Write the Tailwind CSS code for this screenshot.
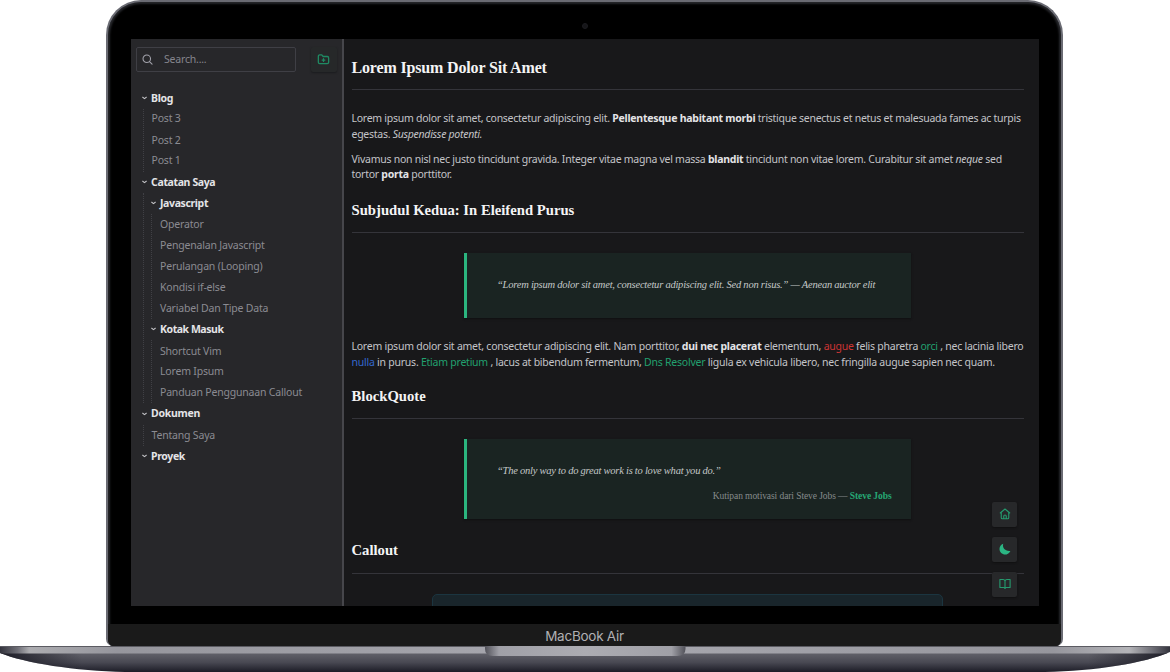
<!DOCTYPE html>
<html lang="id">
<head>
<meta charset="utf-8">
<title>Lorem Ipsum Dolor Sit Amet</title>
<script src="https://cdn.jsdelivr.net/npm/@tailwindcss/browser@4"></script>
</head>
<body class="h-[672px] w-[1170px] overflow-hidden bg-white">
<div class="relative flex h-[672px] w-[1170px] flex-col items-center">

  <!-- lid -->
  <div class="relative h-[646px] w-[957px] -ml-px rounded-t-[35px] rounded-b-[7px] border-[2px] border-b-0 border-[#6a6b73] bg-black flex flex-col overflow-hidden shadow-[inset_0_0_2px_2px_#25262a]">
    <div class="flex h-[36.5px] shrink-0 items-center justify-center pt-[11px]"><span class="size-[6px] rounded-full bg-[#151518] border border-[#1c1c20]"></span></div>

    <!-- screen -->
    <div class="relative ml-[22.5px] flex h-[567.5px] w-[908.5px] shrink-0 overflow-hidden bg-[#18181a] font-['Noto_Sans',sans-serif] text-[10.5px] tracking-[-0.27px] text-[#c4c4c8]">
      <aside class="flex h-full w-[213px] shrink-0 flex-col border-r-2 border-[#46464b] bg-[#27272a]">
        <div class="flex h-[26px] mt-[8px] pl-[5px] shrink-0">
          <div class="flex h-[25.5px] w-[160.5px] items-center rounded-[2px] border border-[#3f3f45] pl-[5px] text-[#85858d]">
            <svg class="size-[11px]" viewBox="0 0 12 12" fill="none" stroke="#a1a1aa" stroke-width="1.2" stroke-linecap="round"><circle cx="5.2" cy="5.2" r="4.1"/><path d="M8.2 8.2 11 11"/></svg>
            <span class="ml-[11.500px] leading-[24px] pb-[1px] tracking-[-0.2px] whitespace-nowrap">Search....</span>
          </div>
          <div class="ml-[15px] flex size-[25.5px] items-center justify-center rounded-[2px] bg-[#262829] shadow-[0_1px_2px_#1b1c1e]">
            <svg class="size-[13px]" viewBox="0 0 24 24" fill="none" stroke="#1f8a63" stroke-width="2.400" stroke-linecap="round" stroke-linejoin="round"><path d="M12 10.500v5M9.500 13h5M2.500 17V6a2.500 2.500 0 0 1 2.500-2.500h3.800l2.500 3H19a2.500 2.500 0 0 1 2.500 2.500v8a2.500 2.500 0 0 1-2.500 2.500H5A2.500 2.500 0 0 1 2.500 17Z"/></svg>
          </div>
        </div>

        <nav class="mt-[15px] flex flex-col pl-[11px] leading-[21px] tracking-[-0.19px] whitespace-nowrap text-[#8b8b92]">
          <div class="flex h-[21px] items-center font-bold tracking-[-0.37px] text-[#e4e4e7]"><svg class="mr-[4.600px] h-[6px] w-[5px]" viewBox="0 0 5 6" fill="none" stroke="#c4c4c8" stroke-width="1.100"><path d="M.4 2 2.500 3.600 4.600 2"/></svg>Blog</div>
          <div class="ml-[1px] border-l border-dotted border-[#404045] pl-[8px]">
            <div class="h-[21px] leading-[19px]">Post 3</div><div class="h-[21px]">Post 2</div><div class="h-[21px] leading-[19px]">Post 1</div>
          </div>
          <div class="flex h-[21px] items-center font-bold tracking-[-0.37px] text-[#e4e4e7]"><svg class="mr-[4.600px] h-[6px] w-[5px]" viewBox="0 0 5 6" fill="none" stroke="#c4c4c8" stroke-width="1.100"><path d="M.4 2 2.500 3.600 4.600 2"/></svg>Catatan Saya</div>
          <div class="ml-[1px] border-l border-dotted border-[#404045] pl-[7.500px]">
            <div class="flex h-[21px] items-center font-bold tracking-[-0.37px] text-[#e4e4e7]"><svg class="mr-[4px] h-[6px] w-[5px]" viewBox="0 0 5 6" fill="none" stroke="#c4c4c8" stroke-width="1.100"><path d="M.4 2 2.500 3.600 4.600 2"/></svg>Javascript</div>
            <div class="border-l border-dotted border-[#404045] pl-[8px]">
              <div class="h-[21px]">Operator</div><div class="h-[21px]">Pengenalan Javascript</div><div class="h-[21px]">Perulangan (Looping)</div><div class="h-[21px]">Kondisi if-else</div><div class="h-[21px]">Variabel Dan Tipe Data</div>
            </div>
            <div class="flex h-[21px] items-center font-bold tracking-[-0.45px] text-[#e4e4e7]"><svg class="mr-[4px] h-[6px] w-[5px]" viewBox="0 0 5 6" fill="none" stroke="#c4c4c8" stroke-width="1.100"><path d="M.4 2 2.500 3.600 4.600 2"/></svg>Kotak Masuk</div>
            <div class="border-l border-dotted border-[#404045] pl-[8px]">
              <div class="h-[21px] leading-[23px]">Shortcut Vim</div><div class="h-[21px]">Lorem Ipsum</div><div class="h-[21px]">Panduan Penggunaan Callout</div>
            </div>
          </div>
          <div class="flex h-[22px] items-center font-bold tracking-[-0.3px] text-[#e4e4e7]"><svg class="mr-[4.600px] h-[6px] w-[5px]" viewBox="0 0 5 6" fill="none" stroke="#c4c4c8" stroke-width="1.100"><path d="M.4 2 2.500 3.600 4.600 2"/></svg>Dokumen</div>
          <div class="ml-[1px] border-l border-dotted border-[#404045] pl-[8px]"><div class="h-[21px]">Tentang Saya</div></div>
          <div class="flex h-[21px] items-center font-bold tracking-[-0.37px] text-[#e4e4e7]"><svg class="mr-[4.600px] h-[6px] w-[5px]" viewBox="0 0 5 6" fill="none" stroke="#c4c4c8" stroke-width="1.100"><path d="M.4 2 2.500 3.600 4.600 2"/></svg>Proyek</div>
        </nav>
      </aside>

      <main class="flex h-full w-[680px] shrink-0 flex-col pl-[8px] whitespace-nowrap leading-[16px]">
        <h1 class="h-[51.500px] shrink-0 border-b border-[#34343a] pt-[18px] font-['Liberation_Serif',serif] text-[16px] leading-[22px] font-bold tracking-[-0.16px] text-[#f4f4f5]">Lorem Ipsum Dolor Sit Amet</h1>
        <div class="mt-[19.500px] h-[42px] shrink-0">
          <div>Lorem ipsum dolor sit amet, consectetur adipiscing elit. <b class="tracking-[-0.25px] text-[#e4e4e7]">Pellentesque habitant morbi</b> tristique senectus et netus et malesuada fames ac turpis</div>
          <div>egestas. <i>Suspendisse potenti.</i></div>
        </div>
        <div class="h-[40px] shrink-0 leading-[15.500px] tracking-[-0.262px]">
          <div>Vivamus non nisl nec justo tincidunt gravida. Integer vitae magna vel massa <b class="text-[#e4e4e7]">blandit</b> tincidunt non vitae lorem. Curabitur sit amet <i>neque</i> sed</div>
          <div>tortor <b class="text-[#e4e4e7]">porta</b> porttitor.</div>
        </div>
        <h2 class="h-[41px] shrink-0 border-b border-[#34343a] pt-[7px] font-['Liberation_Serif',serif] text-[14.700px] leading-[22px] font-bold tracking-normal text-[#f4f4f5]">Subjudul Kedua: In Eleifend Purus</h2>
        <blockquote class="ml-[112px] mt-[20px] flex h-[65px] w-[447px] shrink-0 items-center border-l-[3px] border-[#2bb57f] bg-[#1a2422] pl-[30.500px] font-['Liberation_Serif',serif] text-[10.500px] tracking-[-0.23px] text-[#c4c8c8] italic shadow-[0_1px_2px_#101011]">“Lorem ipsum dolor sit amet, consectetur adipiscing elit. Sed non risus.” — Aenean auctor elit</blockquote>
        <div class="mt-[20px] h-[46px] shrink-0 tracking-[-0.25px]">
          <div>Lorem ipsum dolor sit amet, consectetur adipiscing elit. Nam porttitor, <b class="text-[#e4e4e7]">dui nec placerat</b> elementum, <span class="text-[#cc3535]">augue</span> felis pharetra <span class="text-[#22a06f]">orci</span> , nec lacinia libero</div>
          <div class="tracking-[-0.24px]"><span class="text-[#3468ce]">nulla</span> in purus. <span class="text-[#22a06f]">Etiam pretium</span> , lacus at bibendum fermentum, <span class="text-[#22a06f]">Dns Resolver</span> ligula ex vehicula libero, nec fringilla augue sapien nec quam.</div>
        </div>
        <h2 class="h-[35px] shrink-0 border-b border-[#34343a] pt-[1px] font-['Liberation_Serif',serif] text-[14.700px] leading-[22px] font-bold tracking-normal text-[#f4f4f5]">BlockQuote</h2>
        <blockquote class="ml-[112px] mt-[20px] h-[80px] w-[447px] shrink-0 border-l-[3px] border-[#2bb57f] bg-[#1a2422] pt-[24px] pr-[19px] pl-[30.500px] font-['Liberation_Serif',serif] text-[10.500px] tracking-[-0.24px] shadow-[0_1px_2px_#101011]">
          <div class="text-[#c4c8c8] italic">“The only way to do great work is to love what you do.”</div>
          <div class="mt-[9px] text-right text-[9.500px] tracking-[-0.08px] text-[#868b8c]">Kutipan motivasi dari Steve Jobs — <b class="text-[#26a875]">Steve Jobs</b></div>
        </blockquote>
        <h2 class="mt-[15px] h-[40px] shrink-0 border-b border-[#34343a] pt-[5px] font-['Liberation_Serif',serif] text-[14.700px] leading-[22px] font-bold tracking-normal text-[#f4f4f5]">Callout</h2>
        <div class="ml-[80px] mt-[20px] h-[40px] w-[511.500px] shrink-0 rounded-[5px] border border-[#1b3540] bg-[#19252b]"></div>
      </main>

      <!-- floating actions -->
      <div class="absolute top-[463px] right-[22px] flex flex-col gap-[10px]">
        <div class="flex h-[25px] w-[25px] items-center justify-center rounded-[2px] bg-[#27282a] shadow-[0_1px_2px_#101011]"><svg class="size-[12px]" viewBox="0 0 24 24" fill="none" stroke="#259a6e" stroke-width="2.200" stroke-linejoin="round" stroke-linecap="round"><path d="M2.500 10 12 2l9.500 8M4.500 9v10.500a2 2 0 0 0 2 2h11a2 2 0 0 0 2-2V9M9.500 21v-4.500a2.500 2.500 0 0 1 5 0V21"/></svg></div>
        <div class="flex h-[25px] w-[25px] items-center justify-center rounded-[2px] bg-[#27282a] shadow-[0_1px_2px_#101011]"><svg class="size-[12px]" viewBox="0 0 24 24" fill="#2bb583"><path d="M8.500 1.500C6 9 12 17 22.800 15.800 20 21 16 23 12.500 23 6 23 1 18 1 12 1 7 4 3 8.500 1.500Z"/></svg></div>
        <div class="flex h-[25px] w-[25px] items-center justify-center rounded-[2px] bg-[#27282a] shadow-[0_1px_2px_#101011]"><svg class="size-[12px]" viewBox="0 0 24 24" fill="none" stroke="#259a6e" stroke-width="2.200" stroke-linejoin="round"><path d="M12 5v16M1.800 3H8a4 4 0 0 1 4 3 4 4 0 0 1 4-3h6.200v16H15a3 3 0 0 0-3 2 3 3 0 0 0-3-2H1.800Z"/></svg></div>
      </div>
    </div>

    <div class="mt-auto flex h-[22px] shrink-0 items-center justify-center bg-[#1a1a1a] pt-[2px] font-['Inter',sans-serif] text-[13.500px] leading-[20px] tracking-[-0.25px] text-[#b0b0b3]">MacBook Air</div>
  </div>

  <!-- base -->
  <svg class="block h-[26px] w-[1170px] shrink-0" viewBox="0 0 1170 26">
    <defs>
      <linearGradient id="deck" x1="0" x2="1"><stop offset="0" stop-color="#33333c"/><stop offset=".015" stop-color="#6e6e76"/><stop offset=".025" stop-color="#acacb0"/><stop offset=".1" stop-color="#96969d"/><stop offset=".5" stop-color="#a9a9b0"/><stop offset=".9" stop-color="#96969d"/><stop offset=".965" stop-color="#b4b4b8"/><stop offset=".985" stop-color="#6e6e76"/><stop offset="1" stop-color="#33333c"/></linearGradient>
      <linearGradient id="under" x1="0" x2="0" y1="0" y2="1"><stop offset="0" stop-color="#62626a"/><stop offset=".5" stop-color="#484852"/><stop offset="1" stop-color="#1c1c27"/></linearGradient>
      <linearGradient id="edge" x1="0" x2="1"><stop offset="0" stop-color="#1c1c26"/><stop offset=".07" stop-color="#1c1c26" stop-opacity="0"/><stop offset=".93" stop-color="#1c1c26" stop-opacity="0"/><stop offset="1" stop-color="#1c1c26"/></linearGradient>
      <linearGradient id="notch" x1="0" x2="1"><stop offset="0" stop-color="#52525a"/><stop offset=".07" stop-color="#a0a0a7"/><stop offset=".5" stop-color="#acacb2"/><stop offset=".93" stop-color="#a0a0a7"/><stop offset="1" stop-color="#52525a"/></linearGradient>
      <clipPath id="hull"><path d="M0 0H1170V6C1145 17 1095 25 1045 26H125C75 25 25 17 0 7Z"/></clipPath>
    </defs>
    <g clip-path="url(#hull)">
      <rect y="7" width="1170" height="19" fill="url(#under)"/>
      <rect y="7" width="1170" height="19" fill="url(#edge)"/>
      <rect width="1170" height="7.500" fill="url(#deck)"/>
      <rect width="1170" height="1" fill="#5b5b62"/>
    </g>
    <path d="M485 0H685.500V3Q685.500 10 677 10H493Q485 10 485 3Z" fill="url(#notch)"/>
  </svg>
</div>
</body>
</html>
